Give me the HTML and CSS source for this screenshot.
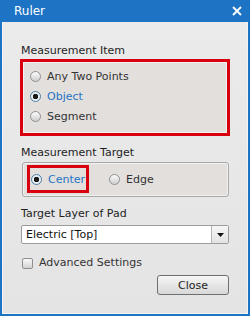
FILE: index.html
```html
<!DOCTYPE html>
<html lang="en">
<head>
    <meta charset="UTF-8">
    <meta name="viewport" content="width=device-width, initial-scale=1.0">
    <title>Ruler</title>
    <link rel="stylesheet" href="styles.css">
</head>
<body>
    <div class="window">
        <div class="titlebar">
            <span class="title">Ruler</span>
            <svg class="close-x" width="10" height="10" viewBox="0 0 10 10">
                <path d="M1 1 L9 9 M9 1 L1 9" stroke="#fff" stroke-width="1.8" fill="none"/>
            </svg>
        </div>
        <div class="content">
            <div class="label label-first">Measurement Item</div>
            <div class="highlight item-group">
                <div class="radio-row"><span class="radio"></span><span>Any Two Points</span></div>
                <div class="radio-row selected"><span class="radio"></span><span>Object</span></div>
                <div class="radio-row"><span class="radio"></span><span>Segment</span></div>
            </div>

            <div class="label label-gap">Measurement Target</div>
            <div class="group target-group">
                <div class="highlight center-box">
                    <div class="radio-row selected"><span class="radio"></span><span>Center</span></div>
                </div>
                <div class="radio-row edge"><span class="radio"></span><span>Edge</span></div>
            </div>

            <div class="label label-gap">Target Layer of Pad</div>
            <div class="combo">
                <span class="combo-text">Electric [Top]</span>
                <span class="combo-btn">
                    <svg width="7" height="4" viewBox="0 0 7 4"><path d="M0 0 H7 L3.5 4 Z" fill="#111"/></svg>
                </span>
            </div>

            <div class="check-row">
                <span class="checkbox"></span>
                <span>Advanced Settings</span>
            </div>

            <div class="button-row">
                <button class="btn">Close</button>
            </div>
        </div>
    </div>
</body>
</html>
```
FILE: styles.css
```css
* {
    box-sizing: border-box;
    margin: 0;
    padding: 0;
}

body {
    font-family: "DejaVu Sans", sans-serif;
    font-size: 11px;
    color: #2b2b2b;
    background-color: #fff;
}

.window {
    width: 250px;
    height: 316px;
    background-color: #1d73c4;
    padding: 0 2px 2px 2px;
    display: flex;
    flex-direction: column;
}

.titlebar {
    height: 22px;
    display: flex;
    align-items: center;
    justify-content: space-between;
    padding: 0 6px 0 12px;
    color: #fff;
    font-size: 12px;
}

.title {
    margin-top: -1px;
}

.close-x {
    margin-top: -1px;
}

.content {
    flex: 1;
    background: linear-gradient(#ebebeb, #e4e4e4);
    border: 1px solid #f4f4f4;
    border-top: none;
    padding: 0 18px 0 18px;
    display: flex;
    flex-direction: column;
}

.label {
    height: 14px;
    line-height: 14px;
    color: #1e1e1e;
}

.label-first {
    margin-top: 22px;
}

.label-gap {
    margin-top: 10px;
}

.highlight {
    border: 3px solid #d8000f;
}

.item-group {
    margin: 1px -1px 0 -1px;
    height: 77px;
    background-color: #e2dfdd;
    box-shadow: inset 0 0 0 1px #f3f1f0;
    padding: 4px 0 0 7px;
}

.radio-row {
    height: 20px;
    display: flex;
    align-items: center;
    color: #333;
}

.radio-row.selected {
    color: #1f74c4;
}

.radio {
    width: 11px;
    height: 11px;
    border-radius: 50%;
    border: 1px solid #8f9090;
    background: linear-gradient(#fbfbfb, #cfcfcf);
    margin-right: 6px;
    position: relative;
}

.selected .radio {
    border-color: #4f7ea3;
    background: radial-gradient(circle, #1a1a1a 0 2.5px, #e9eef2 3px);
}

.group {
    border: 1px solid #a8a8a8;
    border-radius: 3px;
    background-color: #e2dfdd;
    box-shadow: inset 0 0 0 1px #f3f1f0;
}

.target-group {
    margin: 2px 0 0 1px;
    width: 207px;
    height: 35px;
    padding: 2px 4px;
    display: flex;
    align-items: flex-start;
}

.center-box {
    width: 62px;
    height: 28px;
    padding: 1px 0 0 1px;
    display: flex;
    align-items: center;
}

.edge {
    margin: 1px 0 0 20px;
    height: 26px;
}

.combo {
    margin-top: 4px;
    height: 19px;
    background-color: #fff;
    border: 1px solid #9c9c9c;
    border-radius: 2px;
    display: flex;
    align-items: center;
}

.combo-text {
    flex: 1;
    padding-left: 4px;
    color: #111;
}

.combo-btn {
    width: 17px;
    height: 100%;
    border-left: 1px solid #b5b5b5;
    background: linear-gradient(#f6f6f6, #e3e3e3);
    display: flex;
    align-items: center;
    justify-content: center;
}

.check-row {
    margin-top: 11px;
    height: 14px;
    display: flex;
    align-items: center;
    color: #333;
}

.checkbox {
    width: 11px;
    height: 11px;
    margin: 2px 6px 0 1px;
    border: 1px solid #8f8f8f;
    border-radius: 2px;
    background: linear-gradient(#f8f8f8, #d3d3d3);
}

.button-row {
    margin-top: 6px;
    display: flex;
    justify-content: flex-end;
}

.btn {
    width: 72px;
    height: 20px;
    font-family: "DejaVu Sans", sans-serif;
    font-size: 11px;
    color: #222;
    border: 1px solid #6f6f6f;
    border-radius: 3px;
    background: linear-gradient(#f7f7f7, #e6e6e6 50%, #d8d8d8);
}
```
